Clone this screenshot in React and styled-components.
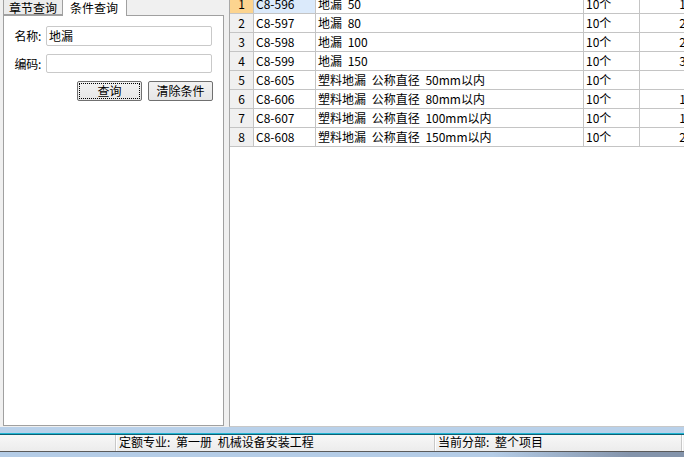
import React from "react";
import styled, { createGlobalStyle } from "styled-components";

const Global = createGlobalStyle`
  html, body { margin: 0; padding: 0; background: #f0f0f0; }
  body { font-family: "Noto Sans CJK SC", "Liberation Sans", sans-serif; font-size: 12px; color: #000; }
  * { box-sizing: border-box; }
`;

const Window = styled.div`
  width: 684px;
  height: 457px;
  display: flex;
  flex-direction: column;
  overflow: hidden;
  background: #f0f0f0;
`;

const Main = styled.div`
  height: 427px;
  display: flex;
  gap: 5px;
`;

const LeftPane = styled.div`
  width: 224px;
  display: flex;
  flex-direction: column;
  padding-left: 3px;
  padding-bottom: 1px;
`;

const TabStrip = styled.div`
  height: 16px;
  display: flex;
  align-items: flex-start;
  border-bottom: 1px solid #a0a0a0;
`;

const Tab = styled.div`
  height: ${(p) => (p.$active ? 16 : 15)}px;
  padding: 0 ${(p) => (p.$active ? 7 : 5)}px;
  width: ${(p) => p.$w}px;
  background: ${(p) => (p.$active ? "#ffffff" : "#ececec")};
  border: 1px solid #a0a0a0;
  border-top: none;
  border-bottom: ${(p) => (p.$active ? "none" : "1px solid #a0a0a0")};
  border-left: ${(p) => (p.$active ? "none" : "1px solid #a0a0a0")};
  font-size: 12px;
  line-height: 15px;
  white-space: nowrap;
`;

const PanelBody = styled.div`
  flex: 1;
  background: #fff;
  border: 1px solid #a0a0a0;
  border-top: none;
  padding: 10px 10px 0 0;
  display: flex;
  flex-direction: column;
  gap: 8px;
`;

const FieldRow = styled.div`
  display: grid;
  grid-template-columns: 37px 166px;
  column-gap: 5px;
  align-items: center;
`;

const Label = styled.label`
  text-align: right;
  font-size: 12px;
  line-height: 14px;
  letter-spacing: -0.3px;
  color: #000;
`;

const Input = styled.div`
  height: ${(p) => p.$h}px;
  border: 1px solid #c9c9c9;
  border-radius: 2px;
  background: #fff;
  padding-left: 2px;
  font-size: 12px;
  line-height: 17px;
`;

const ButtonRow = styled.div`
  display: flex;
  justify-content: flex-end;
  gap: 6px;
`;

const Button = styled.button`
  width: 65px;
  height: 20px;
  padding: 2px;
  border: 1px solid #707070;
  border-radius: 2px;
  background: linear-gradient(#f2f2f2, #e6e6e6);
  font-family: "Noto Sans CJK SC", "Liberation Sans", sans-serif;
  font-size: 12px;
  color: #000;
  display: flex;
`;

const ButtonFace = styled.span`
  flex: 1;
  display: flex;
  align-items: center;
  justify-content: center;
  line-height: 14px;
  outline: ${(p) => (p.$focus ? "1px dotted #000" : "none")};
`;

const GridPane = styled.div`
  flex: 1;
  background: #fff;
  border-left: 1px solid #a8a8a8;
  border-bottom: 1px solid #c8c8c8;
  overflow: hidden;
`;

const Rows = styled.div`
  margin-top: -5px;
  display: flex;
  flex-direction: column;
`;

const Row = styled.div`
  display: flex;
  height: 19px;
`;

const Cell = styled.div`
  flex: 0 0 ${(p) => p.$w}px;
  height: 19px;
  border-right: 1px solid #c4c4c4;
  border-bottom: 1px solid #c4c4c4;
  background: ${(p) => p.$bg || "#fff"};
  padding: 0 ${(p) => p.$pr || 0}px 0 ${(p) => p.$pl || 0}px;
  text-align: ${(p) => p.$align || "left"};
  font-size: 12px;
  line-height: 18px;
  word-spacing: 3px;
  white-space: nowrap;
  overflow: hidden;
`;

const Band = styled.div`
  height: 6px;
  background: #b9d1ea;
`;

const Accent = styled.div`
  height: 2px;
  background: #1fb6d4;
  border-bottom: 1px solid #0f5f72;
`;

const StatusBar = styled.div`
  height: 16px;
  display: flex;
  background: linear-gradient(#f7f7f7, #ececec);
`;

const StatusCell = styled.div`
  width: ${(p) => p.$w}px;
  flex: ${(p) => (p.$grow ? 1 : "none")};
  border-right: 1px solid #c8c8c8;
  box-shadow: 1px 0 0 #ffffff;
  margin-right: 2px;
  padding-left: 1px;
  font-size: 12px;
  line-height: 13px;
  word-spacing: 3px;
  white-space: nowrap;
`;

const Bottom = styled.div`
  border-top: 1px solid #5a5a5a;
  height: 6px;
  background: linear-gradient(to right, #b4cce6 0%, #b4cce6 72%, #8494ab 92%, #8494ab 100%);
`;

const rows = [
  { code: "C8-596", name: "地漏 50", unit: "10个", val: "176.69" },
  { code: "C8-597", name: "地漏 80", unit: "10个", val: "223.18" },
  { code: "C8-598", name: "地漏 100", unit: "10个", val: "262.59" },
  { code: "C8-599", name: "地漏 150", unit: "10个", val: "386.37" },
  { code: "C8-605", name: "塑料地漏 公称直径 50mm以内", unit: "10个", val: "" },
  { code: "C8-606", name: "塑料地漏 公称直径 80mm以内", unit: "10个", val: "115.26" },
  { code: "C8-607", name: "塑料地漏 公称直径 100mm以内", unit: "10个", val: "137.81" },
  { code: "C8-608", name: "塑料地漏 公称直径 150mm以内", unit: "10个", val: "218.42" },
];

export default function App() {
  return (
    <>
      <Global />
      <Window>
        <Main>
          <LeftPane>
            <TabStrip>
              <Tab $w={60}>章节查询</Tab>
              <Tab $active $w={64}>条件查询</Tab>
            </TabStrip>
            <PanelBody>
              <FieldRow>
                <Label>名称:</Label>
                <Input $h={20}>地漏</Input>
              </FieldRow>
              <FieldRow>
                <Label>编码:</Label>
                <Input $h={19} />
              </FieldRow>
              <ButtonRow>
                <Button>
                  <ButtonFace $focus>查询</ButtonFace>
                </Button>
                <Button>
                  <ButtonFace>清除条件</ButtonFace>
                </Button>
              </ButtonRow>
            </PanelBody>
          </LeftPane>
          <GridPane>
            <Rows>
              {rows.map((r, i) => (
                <Row key={r.code}>
                  <Cell $w={24} $align="center" $bg={i === 0 ? "#fcd48f" : "#f0f0f0"}>
                    {i + 1}
                  </Cell>
                  <Cell $w={62} $pl={2} $bg={i === 0 ? "#dbeafb" : "#fff"}>
                    {r.code}
                  </Cell>
                  <Cell $w={268} $pl={2}>{r.name}</Cell>
                  <Cell $w={56} $pl={2}>{r.unit}</Cell>
                  <Cell $w={80} $align="right" $pr={3}>{r.val}</Cell>
                </Row>
              ))}
            </Rows>
          </GridPane>
        </Main>
        <Band />
        <Accent />
        <StatusBar>
          <StatusCell $w={116} />
          <StatusCell $w={317}>定额专业: 第一册 机械设备安装工程</StatusCell>
          <StatusCell $grow>当前分部: 整个项目</StatusCell>
        </StatusBar>
        <Bottom />
      </Window>
    </>
  );
}
